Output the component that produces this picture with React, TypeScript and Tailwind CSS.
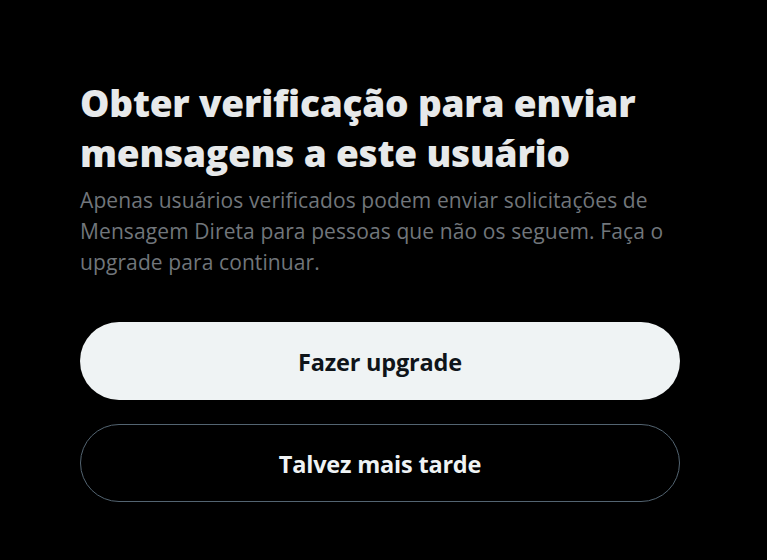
export default function App() {
  return (
    <div className="min-h-[560px] w-full bg-black font-['Open_Sans',sans-serif]">
      <div className="pl-[80px] pt-[78px] w-[700px]">
        <h1 className="text-[37px] leading-[50px] font-extrabold text-[#e7e9ea] tracking-[-0.2px]">
          Obter verificação para enviar mensagens a este usuário
        </h1>
        <p className="mt-[7px] w-[600px] text-[21px] leading-[31px] tracking-[0.1px] text-[#71767b]">
          Apenas usuários verificados podem enviar solicitações de Mensagem Direta para pessoas que não os seguem. Faça o upgrade para continuar.
        </p>
        <div className="mt-[44px] flex flex-col gap-[24px]">
          <button className="h-[78px] w-[600px] rounded-full bg-[#eff3f4] pt-[4px] text-[23.5px] font-bold text-[#0f1419] tracking-[-0.2px]">
            Fazer upgrade
          </button>
          <button className="h-[78px] w-[600px] rounded-full border border-[#536471] bg-black pt-[4px] text-[23.5px] font-bold text-[#eff3f4] tracking-[-0.2px]">
            Talvez mais tarde
          </button>
        </div>
      </div>
    </div>
  );
}
